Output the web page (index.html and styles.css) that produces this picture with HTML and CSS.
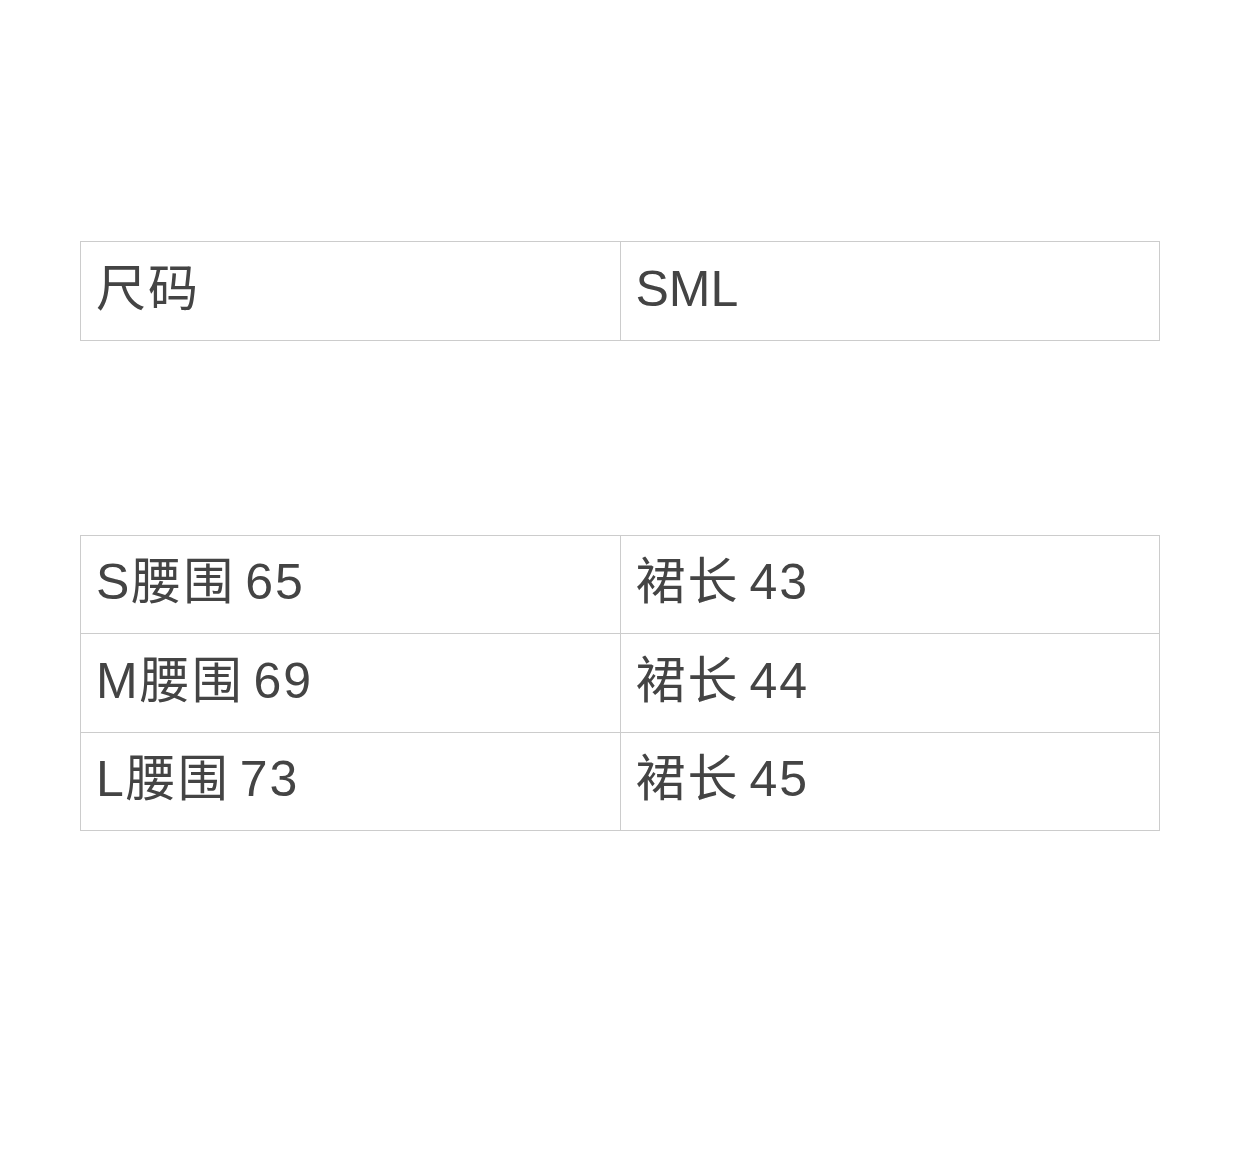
FILE: index.html
```html
<!DOCTYPE html>
<html lang="zh">
<head>
<meta charset="utf-8">
<link rel="stylesheet" href="styles.css">
</head>
<body>
<div class="page">
  <table class="spec">
    <tr><td>尺码</td><td class="latin">SML</td></tr>
  </table>
  <table class="spec second">
    <tr><td>S腰围 65</td><td>裙长 43</td></tr>
    <tr><td>M腰围 69</td><td>裙长 44</td></tr>
    <tr><td>L腰围 73</td><td>裙长 45</td></tr>
  </table>
</div>
</body>
</html>
```
FILE: styles.css
```css
html, body {
  margin: 0;
  padding: 0;
  background: #ffffff;
}
.page {
  padding-top: 241px;
  font-family: "Liberation Sans", Arial, "Noto Sans CJK SC", sans-serif;
  color: #444444;
}
.spec {
  width: 1080px;
  margin: 0 0 0 80px;
  border-collapse: collapse;
  table-layout: fixed;
}
.spec td {
  width: 50%;
  height: 98.5px;
  padding: 0 15px 4px;
  border: 1px solid #cccccc;
  font-size: 50px;
  line-height: 1;
  letter-spacing: 2px;
  word-spacing: -6px;
  vertical-align: middle;
  box-sizing: border-box;
}
.spec td.latin {
  letter-spacing: 0;
}
.second {
  margin-top: 194px;
}
```
